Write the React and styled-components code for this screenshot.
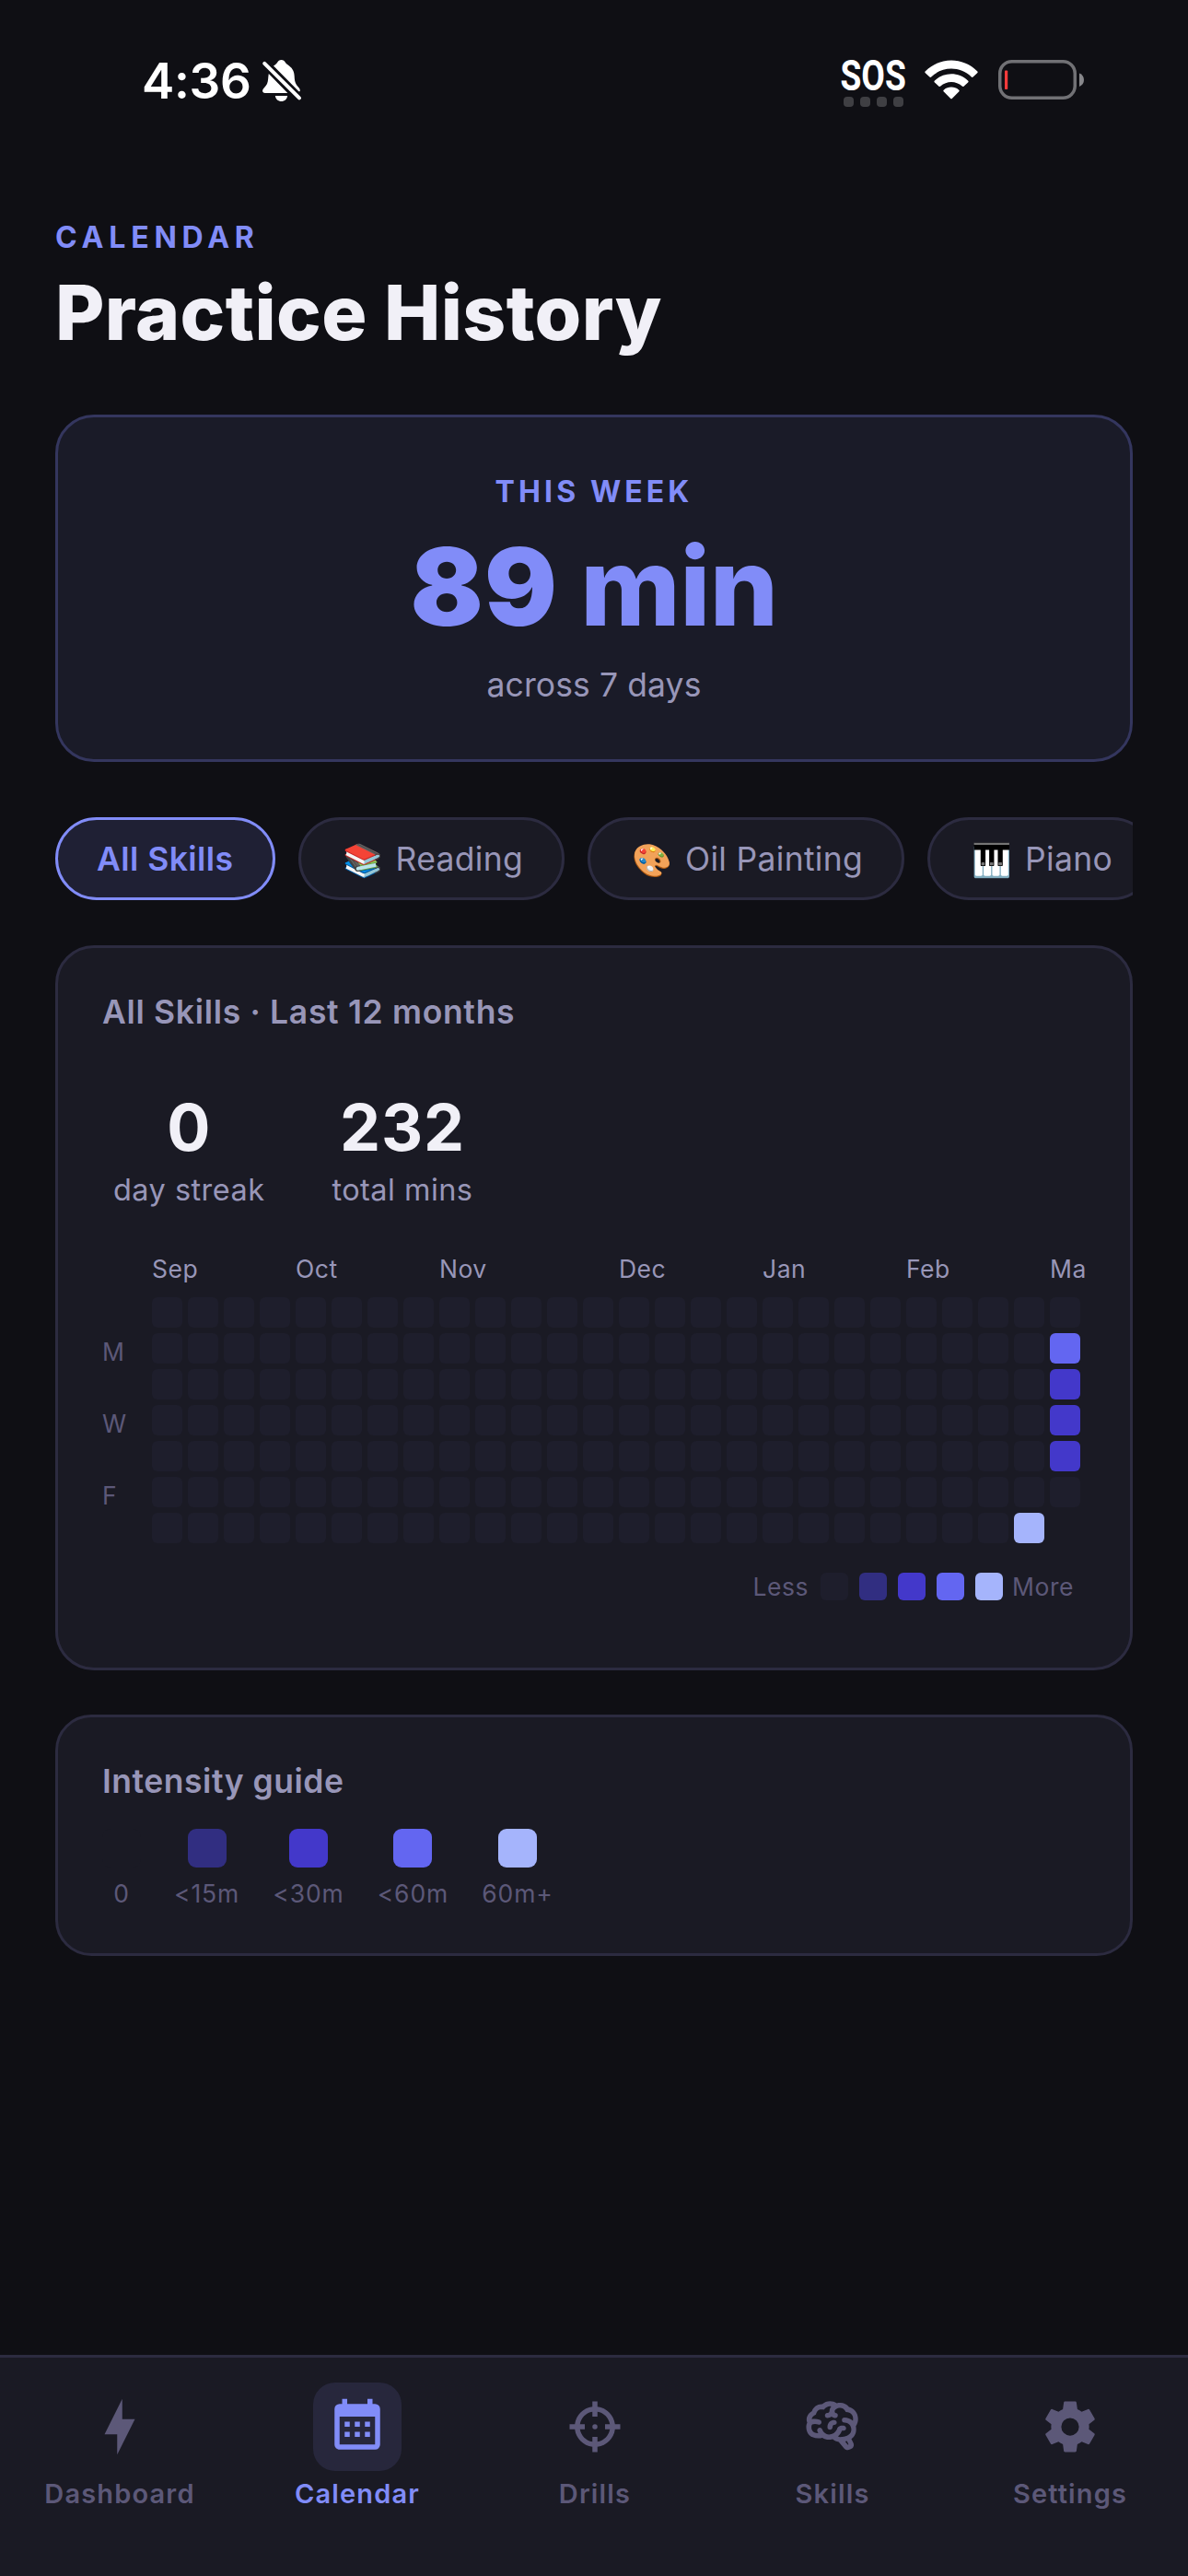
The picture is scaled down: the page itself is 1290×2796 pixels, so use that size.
import React from "react";
import styled, { createGlobalStyle } from "styled-components";

const c = {
  bg: "#0f0f14",
  surface: "#1a1a24",
  border: "#2c2b40",
  primary: "#818cf8",
  text: "#f1f0f7",
  muted: "#9896b8",
  faint: "#5c5878",
};

const LEVELS = ["#1e1e2c", "#312e81", "#4338ca", "#6366f1", "#a5b4fc"];

const GlobalStyle = createGlobalStyle`
  * { box-sizing: border-box; }
  body {
    margin: 0;
    background: ${c.bg};
    font-family: Inter, "Liberation Sans", sans-serif;
    -webkit-font-smoothing: antialiased;
  }
`;

const Screen = styled.div`
  width: 1290px;
  height: 2796px;
  display: flex;
  flex-direction: column;
  background: ${c.bg};
  color: ${c.text};
  overflow: hidden;
`;

/* ---------- status bar ---------- */

const StatusBar = styled.header`
  height: 177px;
  padding: 61px 112px 0 154px;
  display: flex;
  justify-content: space-between;
  align-items: flex-start;
`;

const Clock = styled.div`
  display: flex;
  align-items: center;
  gap: 11px;
  font-size: 53px;
  line-height: 54px;
  font-weight: 600;
  letter-spacing: -0.3px;
  color: #fff;
`;

const StatusRight = styled.div`
  display: flex;
  align-items: flex-start;
`;

const Carrier = styled.div`
  width: 71px;
  display: flex;
  flex-direction: column;
  align-items: center;
`;

const Sos = styled.span`
  font-family: Roboto, Inter, sans-serif;
  font-size: 47px;
  line-height: 42px;
  font-weight: 700;
  color: #fff;
  transform: scaleX(0.79);
`;

const Dots = styled.div`
  display: flex;
  gap: 7px;
  margin-top: 2px;
`;

const Dot = styled.i`
  width: 11px;
  height: 11px;
  border-radius: 4px;
  background: #3f3f43;
`;

const WifiIcon = styled.svg`
  width: 58px;
  height: 43px;
  margin: 4px 22px 0 20px;
`;

const BatteryIcon = styled.svg`
  width: 94px;
  height: 44px;
  margin-top: 4px;
`;

/* ---------- page ---------- */

const Page = styled.main`
  flex: 1;
  padding: 60px 60px 0;
  display: flex;
  flex-direction: column;
`;

const Eyebrow = styled.div`
  font-size: 32px;
  line-height: 42px;
  font-weight: 700;
  letter-spacing: ${(p) => p.$spacing}px;
  color: ${c.primary};
`;

const Title = styled.h1`
  margin: 13px 0 62px;
  font-size: 82px;
  line-height: 96px;
  font-weight: 800;
  letter-spacing: 0.35px;
`;

const Card = styled.section`
  border: 3px solid ${c.border};
  border-radius: 42px;
  background: ${c.surface};
`;

const WeekCard = styled(Card)`
  height: 377px;
  padding-top: 60px;
  display: flex;
  flex-direction: column;
  align-items: center;
  background: #1a1b28;
  border-color: #34365e;
`;

const WeekValue = styled.div`
  margin: 16px 0;
  font-size: 117px;
  line-height: 132px;
  font-weight: 900;
  letter-spacing: 1px;
  color: ${c.primary};
`;

const WeekUnit = styled.span`
  font-weight: 800;
  letter-spacing: -0.6px;
`;

const WeekCaption = styled.div`
  margin-top: 1px;
  font-size: 35.5px;
  line-height: 48px;
  letter-spacing: 0.1px;
  color: ${c.muted};
`;

const ChipRow = styled.nav`
  margin: 60px 0 49px;
  display: flex;
  gap: 25px;
  overflow: hidden;
`;

const Chip = styled.div`
  flex: none;
  height: 90px;
  padding: 2px 42px 0;
  display: flex;
  align-items: center;
  border: 3px solid ${(p) => (p.$active ? c.primary : c.border)};
  border-radius: 45px;
  background: ${(p) => (p.$active ? "#1f2034" : c.surface)};
  color: ${(p) => (p.$active ? c.primary : c.muted)};
  font-size: 35.5px;
  line-height: 44px;
  font-weight: ${(p) => (p.$active ? 600 : 400)};
  letter-spacing: ${(p) => (p.$active ? 0.45 : 0.3)}px;
  white-space: nowrap;
`;

const Emoji = styled.span`
  width: 61px;
  padding-left: 3px;
  font-size: 35px;
  line-height: 40px;
`;

const CardTitle = styled.h2`
  margin: 0;
  font-size: 35.5px;
  line-height: 44px;
  font-weight: 600;
  letter-spacing: ${(p) => p.$spacing}px;
  color: ${c.muted};
`;

const HistoryCard = styled(Card)`
  height: 787px;
  padding: 48px 48px 0;
`;

const Stats = styled.div`
  display: flex;
  gap: 73px;
  margin: 60px 0 0 12px;
`;

const Stat = styled.div`
  display: flex;
  flex-direction: column;
  align-items: center;
`;

const StatValue = styled.div`
  font-size: 70px;
  line-height: 86px;
  font-weight: 700;
  letter-spacing: 0.8px;
`;

const StatLabel = styled.div`
  margin-top: 5px;
  font-size: 32.5px;
  line-height: 40px;
  letter-spacing: 0.45px;
  color: ${c.muted};
`;

const Heatmap = styled.div`
  margin-top: 49px;
  display: grid;
  grid-template-columns: 54px 1fr;
  row-gap: 15px;
`;

const Months = styled.div`
  grid-column: 2;
  display: grid;
  grid-template-columns: repeat(26, 39px);
  height: 32px;
`;

const Month = styled.span`
  grid-row: 1;
  grid-column: ${(p) => p.$col};
  width: 39px;
  font-size: 26.5px;
  line-height: 32px;
  letter-spacing: 0.5px;
  white-space: nowrap;
  color: ${c.muted};
`;

const DayLabels = styled.div`
  display: grid;
  grid-template-rows: repeat(7, 33px);
  row-gap: 6px;
  padding-top: 4px;
`;

const DayLabel = styled.span`
  font-size: 26.5px;
  line-height: 33px;
  color: ${c.faint};
`;

const Cells = styled.div`
  display: grid;
  grid-auto-flow: column;
  grid-template-rows: repeat(7, 33px);
  grid-auto-columns: 33px;
  gap: 6px;
`;

const Cell = styled.i`
  border-radius: 6px;
  background: ${(p) => LEVELS[p.$level]};
`;

const Legend = styled.div`
  margin-top: 28px;
  padding-right: 13px;
  display: flex;
  justify-content: flex-end;
  align-items: center;
  gap: 12px;
  font-size: 26.5px;
  line-height: 30px;
  letter-spacing: 0.55px;
  color: ${c.faint};
`;

const LegendText = styled.span`
  margin-right: ${(p) => p.$after || 0}px;
  margin-left: ${(p) => p.$before || 0}px;
`;

const LegendBox = styled.i`
  width: 30px;
  height: 30px;
  border-radius: 6px;
  background: ${(p) => LEVELS[p.$level]};
`;

const GuideCard = styled(Card)`
  height: 262px;
  margin-top: 48px;
  padding: 48px 48px 0;
  border-radius: 39px;
`;

const Guide = styled.div`
  margin-top: 29px;
  display: flex;
  gap: 36px;
`;

const GuideItem = styled.div`
  min-width: 42px;
  display: flex;
  flex-direction: column;
  align-items: center;
  gap: 12px;
  font-size: 26.5px;
  line-height: 32px;
  letter-spacing: 0.9px;
  color: ${c.faint};
`;

const GuideBox = styled.i`
  width: 42px;
  height: 42px;
  border-radius: 9px;
  background: ${(p) => (p.$level ? LEVELS[p.$level] : c.surface)};
`;

/* ---------- tab bar ---------- */

const TabBar = styled.footer`
  height: 240px;
  padding: 27px 0 0 1px;
  display: grid;
  grid-template-columns: repeat(5, 258px);
  border-top: 3px solid ${c.border};
  background: ${c.surface};
`;

const Tab = styled.div`
  display: flex;
  flex-direction: column;
  align-items: center;
  gap: 8px;
  color: ${(p) => (p.$active ? c.primary : c.faint)};
  font-size: 29px;
  line-height: 34px;
  font-weight: 600;
  letter-spacing: 1.15px;
`;

const TabIcon = styled.span`
  width: 96px;
  height: 96px;
  display: grid;
  place-items: center;
  border-radius: 24px;
  background: ${(p) => (p.$active ? "#27273c" : "transparent")};

  svg {
    width: 66px;
    height: 66px;
    fill: currentColor;
  }
`;

const ICONS = {
  bolt: "M11 15H6L13 1V9H18L11 23V15Z",
  calendar:
    "M9,10V12H7V10H9M13,10V12H11V10H13M17,10V12H15V10H17M19,3A2,2 0 0,1 21,5V19A2,2 0 0,1 19,21H5C3.89,21 3,20.1 3,19V5A2,2 0 0,1 5,3H6V1H8V3H16V1H18V3H19M19,19V8H5V19H19M9,14V16H7V14H9M13,14V16H11V14H13M17,14V16H15V14H17Z",
  crosshairs:
    "M3.05,13H2V11H4.07C4.53,7.37 7.37,4.53 11,4.07V2H13V4.07C16.63,4.53 19.47,7.37 19.93,11H22V13H19.93C19.47,16.63 16.63,19.47 13,19.93V22H11V19.93C7.37,19.47 4.53,16.63 4.07,13H3.05M11,6.09C8.48,6.5 6.5,8.48 6.09,11H8V13H6.09C6.5,15.52 8.48,17.5 11,17.91V16H13V17.91C15.52,17.5 17.5,15.52 17.91,13H16V11H17.91C17.5,8.48 15.52,6.5 13,6.09V8H11V6.09M12,11A1,1 0 0,1 13,12A1,1 0 0,1 12,13A1,1 0 0,1 11,12A1,1 0 0,1 12,11Z",
  brain:
    "M21.33,12.91C21.42,14.46 20.71,15.95 19.44,16.86L20.21,18.35C20.44,18.8 20.47,19.33 20.27,19.8C20.08,20.27 19.69,20.64 19.21,20.8L18.42,21.05C18.25,21.11 18.06,21.14 17.88,21.14C17.37,21.14 16.89,20.91 16.56,20.5L14.44,18C13.55,17.85 12.71,17.47 12,16.9C11.5,17.05 11,17.13 10.5,17.13C9.62,17.13 8.74,16.86 8,16.34C7.47,16.5 6.93,16.57 6.38,16.56C5.59,16.57 4.81,16.41 4.08,16.11C2.65,15.47 1.7,14.07 1.65,12.5C1.57,11.78 1.69,11.05 2,10.39C1.71,9.64 1.68,8.82 1.93,8.06C2.3,7.11 3,6.32 3.87,5.82C4.45,4.13 6.08,3 7.87,3.12C9.47,1.62 11.92,1.46 13.7,2.75C14.12,2.64 14.56,2.58 15,2.58C16.36,2.55 17.65,3.15 18.5,4.22C20.54,4.75 22,6.57 22.08,8.69C22.13,9.8 21.83,10.89 21.22,11.82C21.29,12.18 21.33,12.54 21.33,12.91M16.33,11.5C16.9,11.57 17.35,12 17.35,12.57A1,1 0 0,1 16.35,13.57H15.72C15.4,14.47 14.84,15.26 14.1,15.86C14.35,15.95 14.61,16 14.87,16.07C20,16 19.4,12.87 19.4,12.82C19.34,11.39 18.14,10.27 16.71,10.33A1,1 0 0,1 15.71,9.33A1,1 0 0,1 16.71,8.33C17.94,8.36 19.12,8.82 20.04,9.63C20.09,9.34 20.12,9.04 20.12,8.74C20.06,7.5 19.5,6.42 17.25,6.21C16,3.25 12.85,4.89 12.85,5.81V5.81C12.82,6.04 13.06,6.53 13.1,6.56A1,1 0 0,1 14.1,7.56C14.1,8.11 13.65,8.56 13.1,8.56V8.56C12.57,8.54 12.07,8.34 11.67,8C11.19,8.31 10.64,8.5 10.07,8.56V8.56C9.5,8.61 9.03,8.21 9,7.66C8.92,7.1 9.33,6.61 9.88,6.56C10.04,6.54 10.82,6.42 10.82,5.79V5.79C10.82,5.13 11.07,4.5 11.5,4C10.58,3.75 9.59,4.08 8.59,5.29C6.75,5 6,5.25 5.45,7.2C4.5,7.67 4,8 3.78,9C4.86,8.78 5.97,8.87 7,9.25C7.5,9.44 7.78,10 7.59,10.54C7.4,11.06 6.82,11.32 6.3,11.13C5.57,10.81 4.75,10.79 4,11.07C3.68,11.34 3.68,11.9 3.68,12.34C3.68,13.08 4.05,13.77 4.68,14.17C5.21,14.44 5.8,14.58 6.39,14.57C6.24,14.31 6.11,14.04 6,13.76C5.81,13.22 6.1,12.63 6.64,12.44C7.18,12.25 7.77,12.54 7.96,13.08C8.36,14.22 9.38,15 10.58,15.13C11.95,15.06 13.17,14.25 13.77,13C14,11.62 15.11,11.5 16.33,11.5M18.33,18.97L17.71,17.67L17,17.83L18,19.08L18.33,18.97M13.68,10.36C13.7,9.83 13.3,9.38 12.77,9.33C12.06,9.29 11.37,9.53 10.84,10C10.27,10.58 9.97,11.38 10,12.19A1,1 0 0,0 11,13.19C11.57,13.19 12,12.74 12,12.19C12,11.92 12.07,11.65 12.23,11.43C12.35,11.33 12.5,11.28 12.66,11.28C13.21,11.31 13.68,10.9 13.68,10.36Z",
  cog: "M12,15.5A3.5,3.5 0 0,1 8.5,12A3.5,3.5 0 0,1 12,8.5A3.5,3.5 0 0,1 15.5,12A3.5,3.5 0 0,1 12,15.5M19.43,12.97C19.47,12.65 19.5,12.33 19.5,12C19.5,11.67 19.47,11.34 19.43,11L21.54,9.37C21.73,9.22 21.78,8.95 21.66,8.73L19.66,5.27C19.54,5.05 19.27,4.96 19.05,5.05L16.56,6.05C16.04,5.66 15.5,5.32 14.87,5.07L14.5,2.42C14.46,2.18 14.25,2 14,2H10C9.75,2 9.54,2.18 9.5,2.42L9.13,5.07C8.5,5.32 7.96,5.66 7.44,6.05L4.95,5.05C4.73,4.96 4.46,5.05 4.34,5.27L2.34,8.73C2.21,8.95 2.27,9.22 2.46,9.37L4.57,11C4.53,11.34 4.5,11.67 4.5,12C4.5,12.33 4.53,12.65 4.57,12.97L2.46,14.63C2.27,14.78 2.21,15.05 2.34,15.27L4.34,18.73C4.46,18.95 4.73,19.03 4.95,18.95L7.44,17.94C7.96,18.34 8.5,18.68 9.13,18.93L9.5,21.58C9.54,21.82 9.75,22 10,22H14C14.25,22 14.46,21.82 14.5,21.58L14.87,18.93C15.5,18.67 16.04,18.34 16.56,17.94L19.05,18.95C19.27,19.03 19.54,18.95 19.66,18.73L21.66,15.27C21.78,15.05 21.73,14.78 21.54,14.63L19.43,12.97Z",
};

const CHIPS = [
  { label: "All Skills", active: true },
  { label: "Reading", emoji: "📚" },
  { label: "Oil Painting", emoji: "🎨" },
  { label: "Piano", emoji: "🎹" },
];

const MONTHS = [
  ["Sep", 1],
  ["Oct", 5],
  ["Nov", 9],
  ["Dec", 14],
  ["Jan", 18],
  ["Feb", 22],
  ["Ma", 26],
];

const DAYS = ["", "M", "", "W", "", "F", ""];

// 26 weeks, Sunday first; the current week stops on Friday.
const ACTIVITY = Array(26 * 7 - 1).fill(0);
ACTIVITY[24 * 7 + 6] = 4;
ACTIVITY[25 * 7 + 1] = 3;
ACTIVITY[25 * 7 + 2] = 2;
ACTIVITY[25 * 7 + 3] = 2;
ACTIVITY[25 * 7 + 4] = 2;

const GUIDE = ["0", "<15m", "<30m", "<60m", "60m+"];

const TABS = [
  ["Dashboard", "bolt"],
  ["Calendar", "calendar"],
  ["Drills", "crosshairs"],
  ["Skills", "brain"],
  ["Settings", "cog"],
];

const BellOff = () => (
  <svg width="44" height="48" viewBox="0 0 44 48" fill="#fff">
    <path d="M13 7.5 C15.5 5.8 16.3 5.3 17 4 C18 2 19.5 1 21.5 1 C23.5 1 25 2 26 4 C27 5.5 28.3 6 30 7.5 C34 10.5 35.5 14 35.7 19 C35.9 24 36.5 26.5 39.5 30 C41 31.8 42 33 41.8 34.5 C41.6 35.4 41 35.6 40.2 35 Z" />
    <path d="M7.8 16 L28.3 37 H4 C1.8 37 0.6 35.5 1.2 33.7 C1.8 31.8 4.6 30 6 27 C7.4 24 7 20 7.8 16 Z" />
    <path d="M14.8 40 H28.2 C27.6 43.8 25 46 21.5 46 C18 46 15.4 43.8 14.8 40 Z" />
    <path d="M3.2 4.8 L41 42.4" stroke="#fff" strokeWidth="4" strokeLinecap="round" />
  </svg>
);

const Wifi = () => (
  <WifiIcon viewBox="0 0 58 43" fill="#fff">
    <path d="M0.9 12.2 C16.5 -3.5 41.5 -3.5 57.1 12.2 C57.9 13 57.9 13.6 57.2 14.3 L52.6 18.5 C51.9 19.1 51.4 19 50.8 18.4 C38.6 6.6 19.4 6.6 7.2 18.4 C6.6 19 6.1 19.1 5.4 18.5 L0.8 14.3 C0.1 13.6 0.1 13 0.9 12.2 Z" />
    <path d="M11 22.4 C21 12.7 37 12.7 47 22.4 C47.8 23.2 47.8 23.8 47.1 24.5 L42.5 28.7 C41.8 29.3 41.3 29.2 40.7 28.6 C34.1 22.5 23.9 22.5 17.3 28.6 C16.7 29.2 16.2 29.3 15.5 28.7 L10.9 24.5 C10.2 23.8 10.2 23.2 11 22.4 Z" />
    <path d="M21 32.4 C25.6 28.6 32.4 28.6 37 32.4 C37.9 33.1 37.9 33.8 37.2 34.5 L30 41.7 C29.3 42.4 28.7 42.4 28 41.7 L20.8 34.5 C20.1 33.8 20.1 33.1 21 32.4 Z" />
  </WifiIcon>
);

const Battery = () => (
  <BatteryIcon viewBox="0 0 94 44">
    <rect x="1.75" y="1.75" width="81.5" height="39.5" rx="13" fill="none" stroke="#717175" strokeWidth="3.5" />
    <rect x="7" y="11.5" width="3.2" height="20.5" rx="0.8" fill="#ff3b3b" />
    <path d="M88 14.5 C91 15.6 93 18.3 93 21.7 C93 25.1 91 27.8 88 28.9 Z" fill="#87878b" />
  </BatteryIcon>
);

export default function App() {
  return (
    <Screen>
      <GlobalStyle />
      <StatusBar>
        <Clock>
          4:36
          <BellOff />
        </Clock>
        <StatusRight>
          <Carrier>
            <Sos>SOS</Sos>
            <Dots>
              <Dot />
              <Dot />
              <Dot />
              <Dot />
            </Dots>
          </Carrier>
          <Wifi />
          <Battery />
        </StatusRight>
      </StatusBar>

      <Page>
        <Eyebrow $spacing={5.8}>CALENDAR</Eyebrow>
        <Title>Practice History</Title>

        <WeekCard>
          <Eyebrow $spacing={4.1}>THIS WEEK</Eyebrow>
          <WeekValue>
            89 <WeekUnit>min</WeekUnit>
          </WeekValue>
          <WeekCaption>across 7 days</WeekCaption>
        </WeekCard>

        <ChipRow>
          {CHIPS.map((chip) => (
            <Chip key={chip.label} $active={chip.active}>
              {chip.emoji && <Emoji>{chip.emoji}</Emoji>}
              {chip.label}
            </Chip>
          ))}
        </ChipRow>

        <HistoryCard>
          <CardTitle $spacing={0.68}>All Skills · Last 12 months</CardTitle>
          <Stats>
            <Stat>
              <StatValue>0</StatValue>
              <StatLabel>day streak</StatLabel>
            </Stat>
            <Stat>
              <StatValue>232</StatValue>
              <StatLabel>total mins</StatLabel>
            </Stat>
          </Stats>
          <Heatmap>
            <Months>
              {MONTHS.map(([name, col]) => (
                <Month key={name} $col={col}>
                  {name}
                </Month>
              ))}
            </Months>
            <DayLabels>
              {DAYS.map((day, i) => (
                <DayLabel key={i}>{day}</DayLabel>
              ))}
            </DayLabels>
            <Cells>
              {ACTIVITY.map((level, i) => (
                <Cell key={i} $level={level} />
              ))}
            </Cells>
          </Heatmap>
          <Legend>
            <LegendText $after={1}>Less</LegendText>
            {LEVELS.map((_, i) => (
              <LegendBox key={i} $level={i} />
            ))}
            <LegendText $before={-2}>More</LegendText>
          </Legend>
        </HistoryCard>

        <GuideCard>
          <CardTitle $spacing={0.52}>Intensity guide</CardTitle>
          <Guide>
            {GUIDE.map((label, i) => (
              <GuideItem key={label}>
                <GuideBox $level={i} />
                {label}
              </GuideItem>
            ))}
          </Guide>
        </GuideCard>
      </Page>

      <TabBar>
        {TABS.map(([label, icon]) => (
          <Tab key={label} $active={label === "Calendar"}>
            <TabIcon $active={label === "Calendar"}>
              <svg viewBox="0 0 24 24">
                <path d={ICONS[icon]} />
              </svg>
            </TabIcon>
            {label}
          </Tab>
        ))}
      </TabBar>
    </Screen>
  );
}
